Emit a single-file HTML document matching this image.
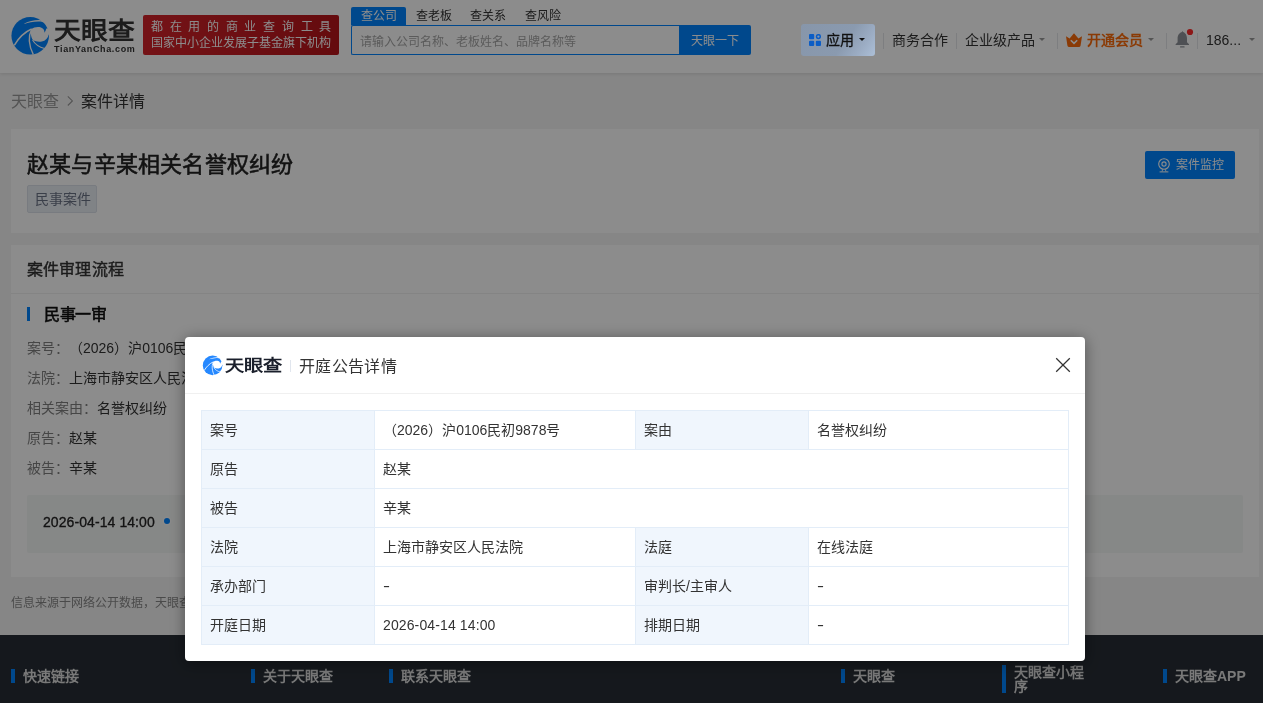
<!DOCTYPE html>
<html lang="zh-CN">
<head>
<meta charset="utf-8">
<title>案件详情</title>
<style>
*{box-sizing:border-box;margin:0;padding:0}
html,body{width:1263px;height:703px;overflow:hidden}
body{text-spacing-trim:space-all;font-family:"Liberation Sans",sans-serif;background:#f5f5f5;color:#333;position:relative;font-size:14px}
.abs{position:absolute}
#wrap{position:absolute;left:0;top:0;width:1263px;height:703px;will-change:transform}
/* header */
#hdr{position:absolute;left:0;top:0;width:1263px;height:73px;background:#fff;box-shadow:0 1px 4px rgba(0,0,0,.12)}
#logo-txt{position:absolute;left:54px;top:14px;font-size:24px;font-weight:bold;color:#333;letter-spacing:0;line-height:34px;white-space:nowrap;transform-origin:0 0;transform:scale(1.115,1)}
#logo-sub{position:absolute;left:54px;top:44px;font-size:9px;font-weight:bold;color:#333;letter-spacing:.65px;line-height:10px;white-space:nowrap}
#banner{position:absolute;left:143px;top:15px;width:196px;height:40px;background:linear-gradient(90deg,#d4232a,#b8151b);border-radius:2px;color:#fff;font-size:12px;line-height:16px;padding:4px 0 0 8px;white-space:nowrap}
#banner .l1{letter-spacing:6.7px}
.tab{position:absolute;top:7px;height:18px;line-height:18px;font-size:12px;color:#333;white-space:nowrap}
.tab.on{left:351px;width:55px;background:#0084ff;color:#fff;text-align:center;border-radius:2px 2px 0 0}
#sbox{position:absolute;left:351px;top:25px;width:329px;height:30px;border:1px solid #0084ff;border-right:none;border-radius:2px 0 0 2px;background:#fff;font-size:12px;color:#a6a6a6;line-height:33px;padding-left:8px;white-space:nowrap}
#sbtn{position:absolute;left:679px;top:25px;width:72px;height:30px;background:#0084ff;color:#fff;font-size:12px;line-height:32px;text-align:center;border-radius:0 2px 2px 0;padding-right:1px}
#app{position:absolute;left:801px;top:24px;width:74px;height:32px;background:linear-gradient(125deg,#8796aa 0%,#8a9aaf 58%,#9bacc3 80%,#acbfd7 100%);border-radius:3px}
.nav{position:absolute;top:30px;height:20px;line-height:20px;font-size:14px;color:#333;white-space:nowrap}
.vdiv{position:absolute;top:33px;width:1px;height:16px;background:#e4e5ea}
.caret{position:absolute;top:38px;width:0;height:0;border-left:3.2px solid transparent;border-right:3.2px solid transparent;border-top:3.6px solid #999}
/* breadcrumb */
#bc{position:absolute;left:11px;top:91px;font-size:16px;line-height:22px;color:#999;white-space:nowrap}
#bc b{font-weight:normal;color:#333}
.card{position:absolute;left:11px;width:1248px;background:#fff}
#c1{top:129px;height:104px}
#c2{top:245px;height:332px}
#title{position:absolute;left:16px;top:20px;font-size:22px;font-weight:400;-webkit-text-stroke:.55px #222;letter-spacing:.2px;line-height:32px;color:#222;white-space:nowrap}
#tag{position:absolute;left:16px;top:56px;width:70px;height:28px;border:1px solid #dbe1ea;background:#eaeef5;border-radius:2px;font-size:14px;line-height:26px;text-align:center;color:#6a7385;padding-left:1px}
#mon{position:absolute;left:1134px;top:22px;width:90px;height:28px;background:#0084ff;border-radius:2px;color:#fff;font-size:12px;line-height:28px;padding-left:31px;white-space:nowrap}
#c2 h3{position:absolute;left:16px;top:14px;font-size:16px;line-height:22px;font-weight:400;-webkit-text-stroke:.4px #333;letter-spacing:.15px;color:#333;white-space:nowrap}
#c2 .hr{position:absolute;left:0;top:48px;width:1248px;height:1px;background:#f0f0f0}
#c2 .bar{position:absolute;left:16px;top:62px;width:3px;height:14px;background:#0084ff}
#c2 h4{position:absolute;left:33px;top:59px;font-size:16px;line-height:22px;font-weight:400;-webkit-text-stroke:.65px #111;color:#111;white-space:nowrap;letter-spacing:-.3px}
.row{position:absolute;left:16px;font-size:14px;line-height:20px;color:#808080;white-space:nowrap}
.row span{color:#333}
#tl{position:absolute;left:16px;top:250px;width:1216px;height:58px;background:#f5f7f6;border-radius:2px}
#tl .d{position:absolute;left:16px;top:17px;font-size:14px;line-height:20px;color:#222;-webkit-text-stroke:.3px #222;letter-spacing:.08px;white-space:nowrap}
#tl .dot{position:absolute;left:137px;top:23px;width:6px;height:6px;border-radius:50%;background:#0084ff;box-shadow:0 0 0 1.5px rgba(255,255,255,.55)}
#note{position:absolute;left:11px;top:595px;font-size:12px;line-height:17px;color:#888;white-space:nowrap}
#ftr{position:absolute;left:0;top:635px;width:1263px;height:68px;background:#272d35}
.ft{position:absolute;font-size:14px;font-weight:bold;color:#dcdcdc;line-height:14px;white-space:nowrap}
.fb{position:absolute;width:4px;background:#0084ff}
#mask{position:absolute;left:0;top:0;width:1263px;height:703px;background:rgba(0,0,0,.45)}
/* modal */
#modal{position:absolute;left:185px;top:337px;width:900px;height:324px;background:#fff;border-radius:4px;box-shadow:0 2px 16px rgba(0,0,0,.42)}
#mh{position:absolute;left:0;top:0;width:900px;height:57px;border-bottom:1px solid #f0f0f0}
#mlogo{position:absolute;left:40px;top:17px;font-size:16px;font-weight:bold;color:#1a1f2b;line-height:24px;white-space:nowrap;transform-origin:0 0;transform:scale(1.2,.98)}
#mdiv{position:absolute;left:105px;top:23px;width:1px;height:12px;background:#e1e6ee}
#mtitle{position:absolute;left:114px;top:19px;font-size:16px;line-height:22px;color:#333;white-space:nowrap;letter-spacing:.35px}
#tb{position:absolute;left:16px;top:73px;width:868px;height:235px;background:#e3edf8;font-size:14px;color:#333}
.c{position:absolute;height:38px;line-height:38px;padding-left:8px;white-space:nowrap;background:#fff}
.c.k{background:#f0f6fd}
.dash{display:inline-block;transform-origin:0 50%;transform:scaleX(1.5)}
</style>
</head>
<body>
<div id="wrap">
<div id="hdr">
  <svg class="abs" style="left:8px;top:14px" width="44" height="44" viewBox="0 0 703 703">
    <circle cx="355" cy="348" r="300" fill="#0084ff"/>
    <path d="M375 240 C420 200 525 190 565 240 C578 258 584 280 583 300 L600 268 L613 232 L680 225 L680 322 L652 326 C640 382 600 426 540 440 C485 450 435 438 402 420 C366 380 356 300 375 240Z" fill="#fff"/>
    <path d="M262 153 C330 118 420 95 512 98 L560 90 L575 140 C550 125 520 118 480 120 C400 122 320 140 262 158Z" fill="#fff"/>
    <path d="M100 500 C160 400 260 290 378 240" stroke="#fff" stroke-width="24" fill="none"/>
    <path d="M405 650 C350 540 310 380 378 242" stroke="#fff" stroke-width="22" fill="none"/>
    <path d="M392 415 C430 480 500 530 585 550" stroke="#fff" stroke-width="18" fill="none"/>
  </svg>
  <div id="logo-txt">天眼查</div>
  <div id="logo-sub">TianYanCha.com</div>
  <div id="banner"><div class="l1">都在用的商业查询工具</div><div>国家中小企业发展子基金旗下机构</div></div>
  <div class="tab on">查公司</div>
  <div class="tab" style="left:416px">查老板</div>
  <div class="tab" style="left:470px">查关系</div>
  <div class="tab" style="left:525px">查风险</div>
  <div id="sbox">请输入公司名称、老板姓名、品牌名称等</div>
  <div id="sbtn">天眼一下</div>
  <div class="vdiv" style="left:883px"></div>
  <div class="nav" style="left:892px">商务合作</div>
  <div class="vdiv" style="left:956px"></div>
  <div class="nav" style="left:965px">企业级产品</div>
  <div class="caret" style="left:1039px"></div>
  <div class="vdiv" style="left:1057px"></div>
  <svg class="abs" style="left:1065px;top:32px" width="18" height="16" viewBox="0 0 18 16"><path d="M1 4.2 L4.6 6.6 L9 1.2 L13.4 6.6 L17 4.2 L15.6 13.6 Q15.4 14.9 14.2 14.9 L3.8 14.9 Q2.6 14.9 2.4 13.6Z" fill="#fc6b0a"/><path d="M5.8 8.2 L9 11.4 L12.2 8.2" stroke="#fff" stroke-width="1.6" fill="none"/></svg>
  <div class="nav" style="left:1087px;color:#fc6b0a;font-weight:bold">开通会员</div>
  <div class="caret" style="left:1148px"></div>
  <div class="vdiv" style="left:1166px"></div>
  <svg class="abs" style="left:1174px;top:28px" width="22" height="22" viewBox="0 0 22 22"><path d="M8.3 3 L8.3 3.9 C4.8 4.6 3.6 7.6 3.6 10.6 L3.6 14.2 L1.6 16.2 L1.6 16.9 L15 16.9 L15 16.2 L13 14.2 L13 10.6 C13 7.6 11.8 4.6 8.9 3.9 L8.9 3Z" fill="#8f9399"/><rect x="6" y="18.2" width="4.6" height="1.4" rx=".5" fill="#8f9399"/><circle cx="16" cy="4" r="3.1" fill="#ff2b2b"/></svg>
  <div class="vdiv" style="left:1197px"></div>
  <div class="nav" style="left:1206px">186...</div>
  <div class="caret" style="left:1249px"></div>
</div>
<div id="bc">天眼查 <svg width="8" height="12" viewBox="0 0 8 12" style="margin:0 2px 0 3px"><path d="M1.8 1.3 L6.4 5.9 L1.8 10.5" stroke="#999" stroke-width="1.1" fill="none"/></svg> <b>案件详情</b></div>
<div class="card" id="c1">
  <div id="title">赵某与辛某相关名誉权纠纷</div>
  <div id="tag">民事案件</div>
  <div id="mon"><svg class="abs" style="left:12px;top:7px" width="14" height="15" viewBox="0 0 14 15"><circle cx="7" cy="6" r="5.3" stroke="#fff" stroke-width="1.1" fill="none"/><circle cx="7" cy="6" r="2.1" stroke="#fff" stroke-width="1.1" fill="none"/><path d="M2.6 13.9 H11.4 M5 13.6 Q5.6 12.2 5.6 11.3 M9 13.6 Q8.4 12.2 8.4 11.3" stroke="#fff" stroke-width="1" fill="none"/></svg>案件监控</div>
</div>
<div class="card" id="c2">
  <h3>案件审理流程</h3>
  <div class="hr"></div>
  <div class="bar"></div>
  <h4>民事一审</h4>
  <div class="row" style="top:93px">案号：<span>（2026）沪0106民初9878号</span></div>
  <div class="row" style="top:123px">法院：<span>上海市静安区人民法院</span></div>
  <div class="row" style="top:153px">相关案由：<span>名誉权纠纷</span></div>
  <div class="row" style="top:183px">原告：<span>赵某</span></div>
  <div class="row" style="top:213px">被告：<span>辛某</span></div>
  <div id="tl"><div class="d">2026-04-14 14:00</div><div class="dot"></div></div>
</div>
<div id="note">信息来源于网络公开数据，天眼查仅基于公开数据进行展示，不代表天眼查观点。</div>
<div id="ftr">
  <div class="fb" style="left:11px;top:34px;height:14px"></div><div class="ft" style="left:23px;top:34px">快速链接</div>
  <div class="fb" style="left:251px;top:34px;height:14px"></div><div class="ft" style="left:263px;top:34px">关于天眼查</div>
  <div class="fb" style="left:389px;top:34px;height:14px"></div><div class="ft" style="left:401px;top:34px">联系天眼查</div>
  <div class="fb" style="left:841px;top:34px;height:14px"></div><div class="ft" style="left:853px;top:34px">天眼查</div>
  <div class="fb" style="left:1002px;top:30px;height:28px"></div><div class="ft" style="left:1014px;top:30px;white-space:normal;width:76px">天眼查小程序</div>
  <div class="fb" style="left:1163px;top:34px;height:14px"></div><div class="ft" style="left:1175px;top:34px">天眼查APP</div>
</div>
<div id="mask"></div>
<div id="app"></div>
<svg class="abs" style="left:809px;top:34px" width="12" height="12" viewBox="0 0 12 12"><rect x="0" y="0" width="5.2" height="5.2" rx="1" fill="#0b5dc6"/><rect x="0" y="6.8" width="5.2" height="5.2" rx="1" fill="#0b5dc6"/><rect x="6.8" y="6.8" width="5.2" height="5.2" rx="1" fill="#0b5dc6"/><circle cx="9.4" cy="2.6" r="1.9" fill="none" stroke="#0b5dc6" stroke-width="1.5"/></svg>
<div class="nav" style="left:826px;color:#111;-webkit-text-stroke:.3px #111">应用</div>
<div class="caret" style="left:859px;border-top-color:#111"></div>
<div id="modal">
  <div id="mh">
    <svg class="abs" style="left:16.1px;top:16.6px" width="23" height="23" viewBox="0 0 703 703">
      <circle cx="355" cy="348" r="300" fill="#2588ff"/>
      <path d="M375 240 C420 200 525 190 565 240 C578 258 584 280 583 300 L600 268 L613 232 L680 225 L680 322 L652 326 C640 382 600 426 540 440 C485 450 435 438 402 420 C366 380 356 300 375 240Z" fill="#fff"/>
      <path d="M262 153 C330 118 420 95 512 98 L560 90 L575 140 C550 125 520 118 480 120 C400 122 320 140 262 158Z" fill="#fff"/>
      <path d="M100 500 C160 400 260 290 378 240" stroke="#fff" stroke-width="26" fill="none"/>
      <path d="M405 650 C350 540 310 380 378 242" stroke="#fff" stroke-width="24" fill="none"/>
      <path d="M392 415 C430 480 500 530 585 550" stroke="#fff" stroke-width="20" fill="none"/>
    </svg>
    <div id="mlogo">天眼查</div>
    <div id="mdiv"></div>
    <div id="mtitle">开庭公告详情</div>
    <svg class="abs" style="left:870px;top:20px" width="16" height="16" viewBox="0 0 16 16"><path d="M1.2 1.2 L14.8 14.8 M14.8 1.2 L1.2 14.8" stroke="#333" stroke-width="1.25" fill="none"/></svg>
  </div>
  <div id="tb">
    <div class="c k" style="left:1px;top:1px;width:172px">案号</div>
    <div class="c v" style="left:174px;top:1px;width:260px">（2026）沪0106民初9878号</div>
    <div class="c k" style="left:435px;top:1px;width:172px">案由</div>
    <div class="c v" style="left:608px;top:1px;width:259px">名誉权纠纷</div>
    <div class="c k" style="left:1px;top:40px;width:172px">原告</div>
    <div class="c v" style="left:174px;top:40px;width:693px">赵某</div>
    <div class="c k" style="left:1px;top:79px;width:172px">被告</div>
    <div class="c v" style="left:174px;top:79px;width:693px">辛某</div>
    <div class="c k" style="left:1px;top:118px;width:172px">法院</div>
    <div class="c v" style="left:174px;top:118px;width:260px">上海市静安区人民法院</div>
    <div class="c k" style="left:435px;top:118px;width:172px">法庭</div>
    <div class="c v" style="left:608px;top:118px;width:259px">在线法庭</div>
    <div class="c k" style="left:1px;top:157px;width:172px">承办部门</div>
    <div class="c v" style="left:174px;top:157px;width:260px"><span class="dash">-</span></div>
    <div class="c k" style="left:435px;top:157px;width:172px">审判长/主审人</div>
    <div class="c v" style="left:608px;top:157px;width:259px"><span class="dash">-</span></div>
    <div class="c k" style="left:1px;top:196px;width:172px">开庭日期</div>
    <div class="c v" style="left:174px;top:196px;width:260px"><span style="letter-spacing:.12px">2026-04-14 14:00</span></div>
    <div class="c k" style="left:435px;top:196px;width:172px">排期日期</div>
    <div class="c v" style="left:608px;top:196px;width:259px"><span class="dash">-</span></div>
  </div>
</div>
</div>
</body>
</html>
